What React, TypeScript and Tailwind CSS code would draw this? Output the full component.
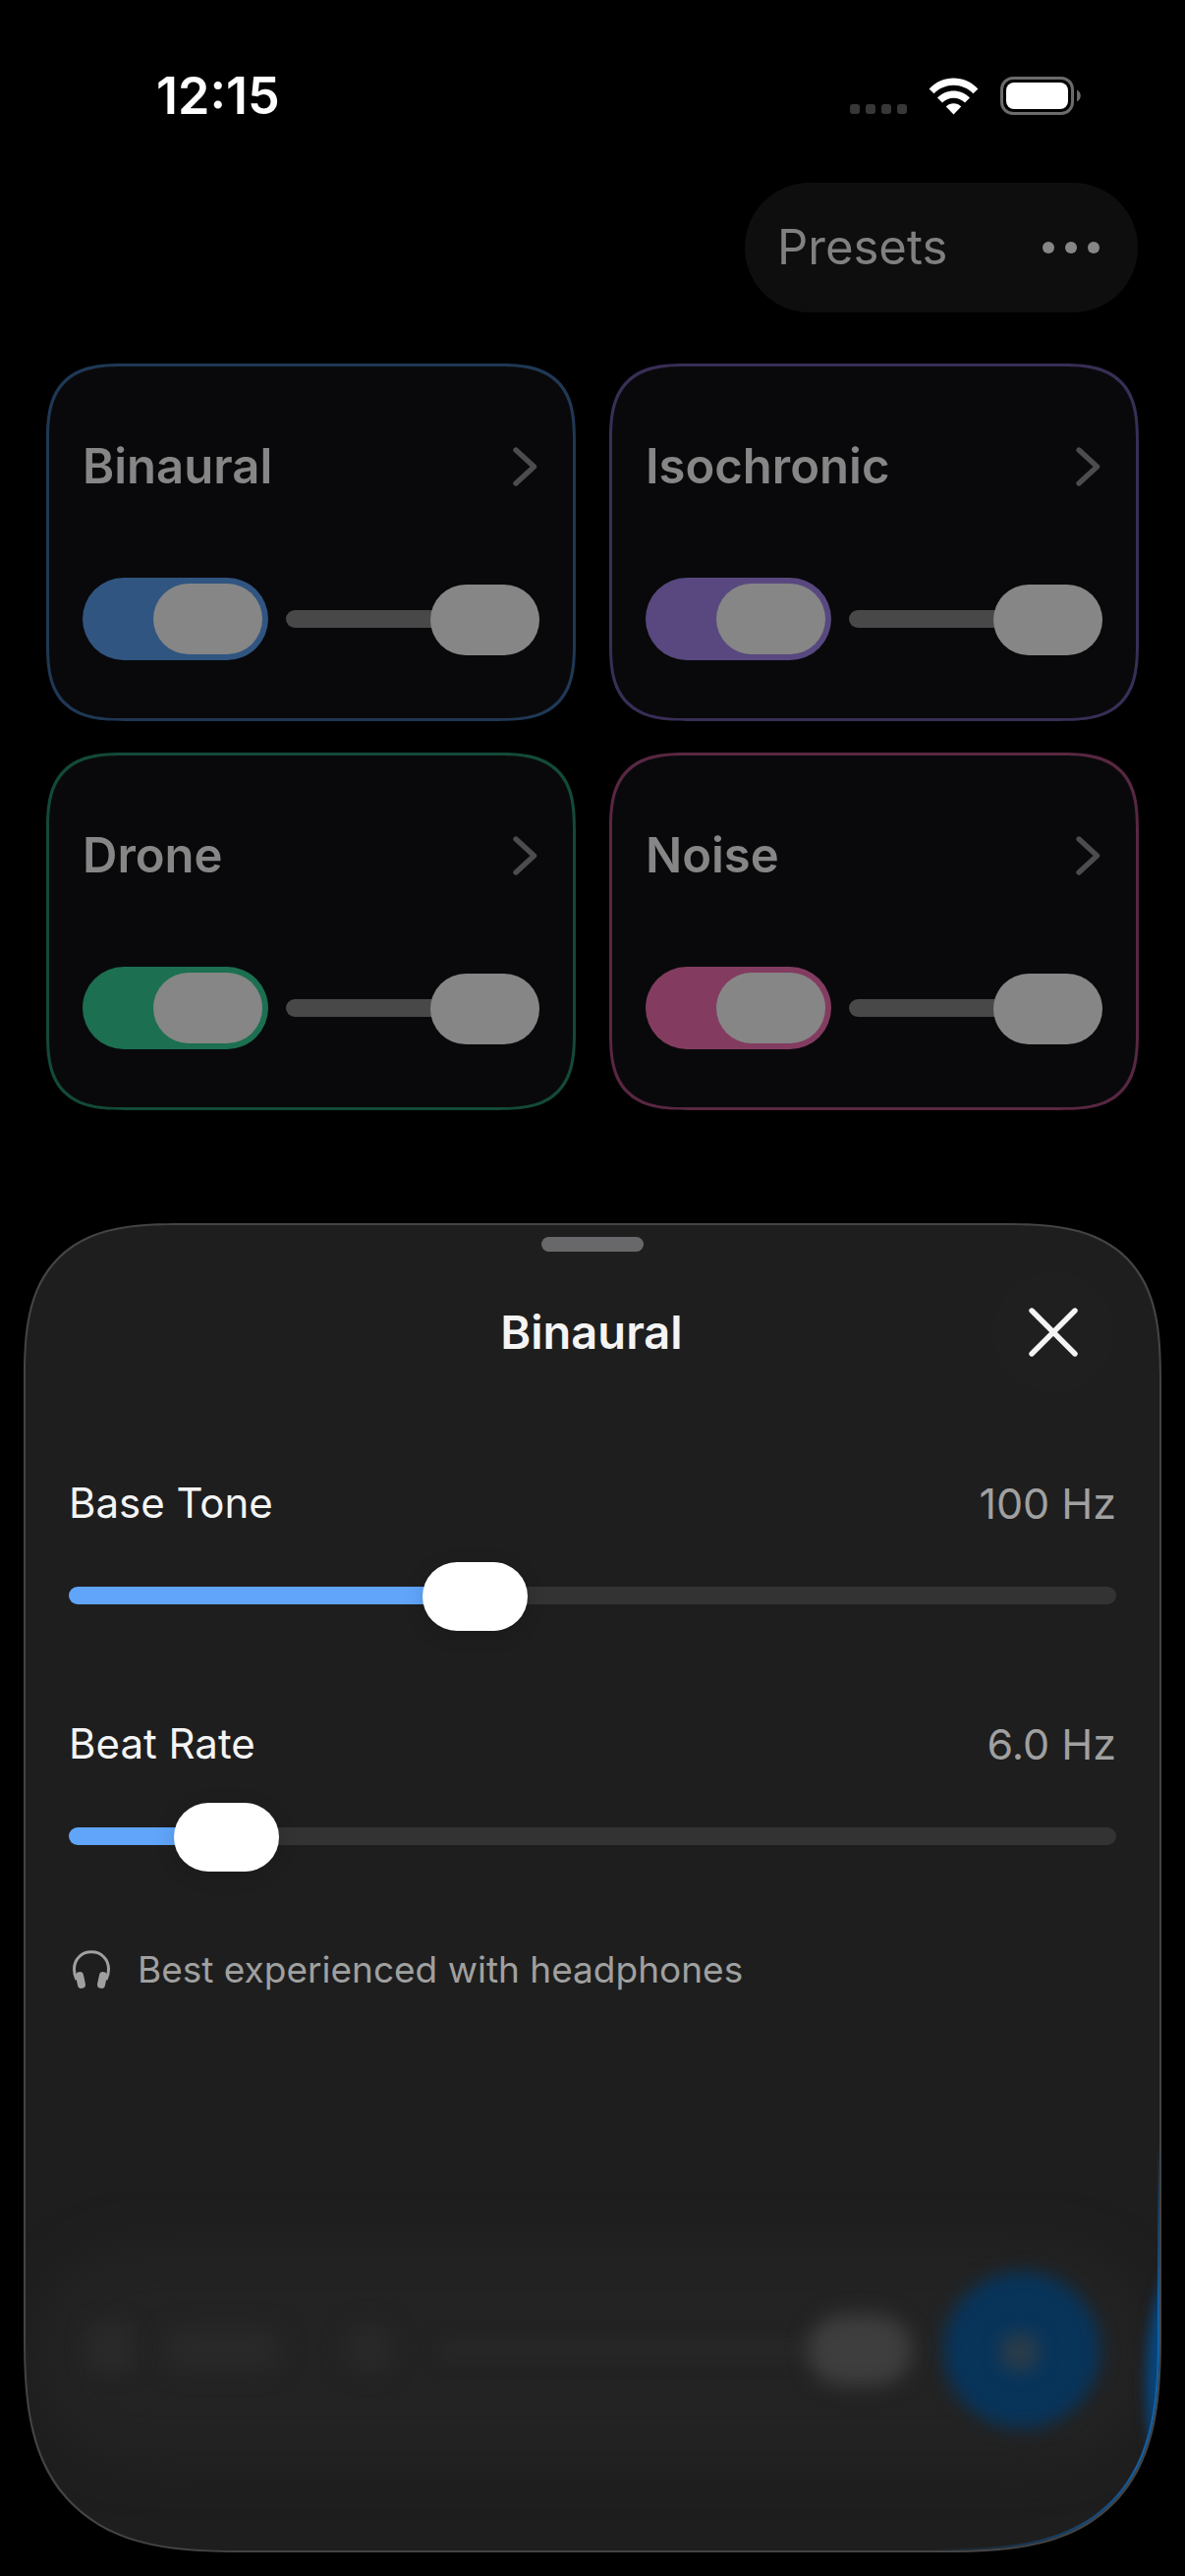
import { useState, type CSSProperties } from "react";

type Channel = {
  name: string;
  volume: number;
  border: string;
  toggle: string;
};

const channels: Channel[] = [
  { name: "Binaural", volume: 100, border: "border-[#1f3855]", toggle: "bg-[#305580]" },
  { name: "Isochronic", volume: 100, border: "border-[#382e56]", toggle: "bg-[#58487f]" },
  { name: "Drone", volume: 100, border: "border-[#134a37]", toggle: "bg-[#1c6f50]" },
  { name: "Noise", volume: 100, border: "border-[#582742]", toggle: "bg-[#833c60]" },
];

function StatusBar() {
  return (
    <div className="flex items-center justify-between pt-[78px] pl-[159px] pr-[106px]">
      <time className="text-[52px] leading-[39px] font-semibold text-white">12:15</time>
      <div className="flex h-[39px] items-center">
        <div className="mr-[22px] flex gap-[6px] self-end pb-px">
          <span className="size-[10px] rounded-[3px] bg-[#373737]" />
          <span className="size-[10px] rounded-[3px] bg-[#373737]" />
          <span className="size-[10px] rounded-[3px] bg-[#373737]" />
          <span className="size-[10px] rounded-[3px] bg-[#373737]" />
        </div>
        <svg className="mr-[22px] h-[38px] w-[51px]" viewBox="0 0 51 38" fill="#fff" aria-label="Wi-Fi">
          <path d="M0.6 11.5C14 -3.2 37 -3.2 50.4 11.5L45.5 16.3C34.5 4.8 16.5 4.8 5.5 16.3Z" />
          <path d="M9 20.6C18 11 33 11 42 20.6L37 25.6C30.6 19 20.4 19 14 25.6Z" />
          <path d="M17.8 29.6C22 25.2 29 25.2 33.2 29.6L25.5 37.4Z" />
        </svg>
        <svg className="h-[39px] w-[82px]" viewBox="0 0 82 39" fill="none" aria-label="Battery">
          <rect x="1.5" y="1.5" width="72" height="36" rx="11.5" stroke="#6b6b6b" strokeWidth="3" />
          <rect x="6" y="6" width="63" height="27" rx="8" fill="#fff" />
          <path d="M78 13.5C83 16 83 23 78 25.5Z" fill="#6b6b6b" />
        </svg>
      </div>
    </div>
  );
}

function ChannelCard({ channel }: { channel: Channel }) {
  const [on, setOn] = useState(true);
  const [volume, setVolume] = useState(channel.volume);

  return (
    <section
      className={`rounded-[60px] border-[3px] bg-[#09090b] px-[34px] pt-[72px] pb-[59px] supports-[corner-shape:squircle]:rounded-[80px] supports-[corner-shape:squircle]:[corner-shape:superellipse(1.5)] ${channel.border}`}
    >
      <button type="button" className="flex h-[60px] w-full items-center justify-between">
        <span className="text-[49px] leading-[60px] font-semibold text-[#868686]">{channel.name}</span>
        <svg className="mr-[2px] h-[40px] w-[25px]" viewBox="0 0 25 40" fill="none" aria-hidden="true">
          <path d="M3 3L21.5 20L3 37" stroke="#4c4c50" strokeWidth="5.4" strokeLinecap="round" strokeLinejoin="round" />
        </svg>
      </button>
      <div className="mt-[83px] flex items-center gap-[18px]">
        <input
          type="checkbox"
          role="switch"
          aria-label={`${channel.name} on`}
          checked={on}
          onChange={(e) => setOn(e.target.checked)}
          className={`flex h-[84px] w-[189px] shrink-0 appearance-none items-center rounded-full p-[6px] before:block before:h-[72px] before:w-[111px] before:rounded-full before:bg-[#868686] checked:justify-end ${channel.toggle}`}
        />
        <input
          type="range"
          aria-label={`${channel.name} volume`}
          value={volume}
          onChange={(e) => setVolume(Number(e.target.value))}
          className="h-[72px] w-full min-w-0 appearance-none bg-transparent [&::-webkit-slider-runnable-track]:h-[18px] [&::-webkit-slider-runnable-track]:rounded-full [&::-webkit-slider-runnable-track]:bg-[#484848] [&::-webkit-slider-thumb]:-mt-[26px] [&::-webkit-slider-thumb]:h-[72px] [&::-webkit-slider-thumb]:w-[111px] [&::-webkit-slider-thumb]:appearance-none [&::-webkit-slider-thumb]:rounded-full [&::-webkit-slider-thumb]:bg-[#868686]"
        />
      </div>
    </section>
  );
}

type ParameterProps = {
  id: string;
  label: string;
  min: number;
  max: number;
  step: number;
  initial: number;
  digits: number;
};

function Parameter({ id, label, min, max, step, initial, digits }: ParameterProps) {
  const [value, setValue] = useState(initial);
  const fill = `${((value - min) / (max - min)) * 100}%`;

  return (
    <div>
      <div className="flex items-center justify-between leading-[60px]">
        <label htmlFor={id} className="text-[42px] text-[#f4f4f4]">{label}</label>
        <span className="text-[43px] text-[#a0a0a0]">{value.toFixed(digits)} Hz</span>
      </div>
      <input
        id={id}
        type="range"
        min={min}
        max={max}
        step={step}
        value={value}
        onChange={(e) => setValue(Number(e.target.value))}
        style={{ "--fill": fill } as CSSProperties}
        className="mt-[29px] block h-[70px] w-full appearance-none bg-transparent [&::-webkit-slider-runnable-track]:h-[18px] [&::-webkit-slider-runnable-track]:rounded-full [&::-webkit-slider-runnable-track]:bg-[linear-gradient(to_right,#60a5fa_var(--fill),#333333_var(--fill))] [&::-webkit-slider-thumb]:-mt-[25px] [&::-webkit-slider-thumb]:h-[70px] [&::-webkit-slider-thumb]:w-[107px] [&::-webkit-slider-thumb]:appearance-none [&::-webkit-slider-thumb]:rounded-full [&::-webkit-slider-thumb]:bg-white [&::-webkit-slider-thumb]:shadow-[0_4px_20px_rgba(0,0,0,0.15)]"
      />
    </div>
  );
}

// The transport bar showing through the frosted sheet
function FrostedTransport() {
  return (
    <div className="pointer-events-none absolute inset-x-0 bottom-0 h-[400px] overflow-hidden" aria-hidden="true">
      <div className="absolute inset-x-[10px] top-[90px] h-[220px] rounded-full bg-[#232323] blur-[24px]" />
      <div className="absolute top-[168px] left-[62px] size-[50px] rounded-xl bg-[#292929] blur-[10px]" />
      <div className="absolute top-[174px] left-[140px] h-[42px] w-[120px] rounded-full bg-[#292929] blur-[12px]" />
      <div className="absolute top-[170px] left-[326px] size-[48px] rounded-full bg-[#292929] blur-[12px]" />
      <div className="absolute top-[186px] right-[300px] left-[420px] h-[20px] bg-[#272727] blur-[8px]" />
      <div className="absolute top-[160px] right-[252px] h-[72px] w-[106px] rounded-full bg-[#3e3e3e] blur-[10px]" />
      <div className="absolute top-[116px] right-[60px] size-[160px] rounded-full bg-[#08345a] blur-[9px]" />
      <div className="absolute top-[178px] right-[122px] size-[40px] rounded-full bg-[#2a3c49] blur-[9px]" />
      <div className="absolute top-[90px] -right-[86px] h-[280px] w-[100px] rounded-[50%] bg-[#08447a] blur-[6px]" />
    </div>
  );
}

export default function App() {
  return (
    <main className="flex min-h-screen flex-col bg-black font-['Inter','Liberation_Sans',sans-serif]">
      <StatusBar />

      <header className="mt-[69px] flex justify-end px-12">
        <div className="flex h-[132px] w-[400px] items-center justify-between rounded-full bg-[#0e0e0f] pr-[39px] pl-[33px]">
          <button type="button" className="text-[49px] leading-[60px] text-[#808080]">Presets</button>
          <button type="button" aria-label="More" className="flex gap-[11px]">
            <span className="size-[12px] rounded-full bg-[#868686]" />
            <span className="size-[12px] rounded-full bg-[#868686]" />
            <span className="size-[12px] rounded-full bg-[#868686]" />
          </button>
        </div>
      </header>

      <div className="mt-[52px] grid grid-cols-2 gap-x-[34px] gap-y-8 px-[47px]">
        {channels.map((channel) => (
          <ChannelCard key={channel.name} channel={channel} />
        ))}
      </div>

      <section
        role="dialog"
        aria-labelledby="sheet-title"
        className="relative mx-6 mt-[115px] mb-6 flex flex-1 flex-col overflow-hidden rounded-t-[119px] rounded-b-[167px] border-2 border-[#444444] bg-[#1e1e1e] px-11 supports-[corner-shape:squircle]:rounded-t-[160px] supports-[corner-shape:squircle]:rounded-b-[224px] supports-[corner-shape:squircle]:[corner-shape:superellipse(1.5)]"
      >
        <FrostedTransport />
        {/* Blue glow picked up by the lower right rim */}
        <div
          className="pointer-events-none absolute -inset-[2px] rounded-t-[119px] rounded-b-[167px] border-[4px] border-[#1260a8] [mask-image:radial-gradient(300px_260px_at_100%_88%,#000_30%,transparent)] supports-[corner-shape:squircle]:rounded-t-[160px] supports-[corner-shape:squircle]:rounded-b-[224px] supports-[corner-shape:squircle]:[corner-shape:superellipse(1.5)]"
          aria-hidden="true"
        />

        <div className="relative">
          <div className="mx-auto mt-3 h-[15px] w-[104px] rounded-full bg-[#68686b]" />
          <div className="mt-5 grid grid-cols-[124px_1fr_124px] items-center pr-[2px]">
            <h1 id="sheet-title" className="col-start-2 text-center text-[47px] leading-[60px] font-semibold text-[#f4f4f4]">
              Binaural
            </h1>
            <button type="button" aria-label="Close" className="flex size-[124px] items-center justify-center rounded-full bg-[#1f1f1f]">
              <svg className="size-[50px]" viewBox="0 0 50 50" aria-hidden="true">
                <path d="M3 3L47 47M47 3L3 47" stroke="#f4f4f4" strokeWidth="5.4" strokeLinecap="round" />
              </svg>
            </button>
          </div>

          <div className="mt-[82px] flex flex-col gap-[86px]">
            <Parameter id="base-tone" label="Base Tone" min={40} max={200} step={1} initial={100} digits={0} />
            <Parameter id="beat-rate" label="Beat Rate" min={0.5} max={50} step={0.5} initial={6} digits={1} />
          </div>

          <p className="mt-[71px] flex items-center gap-[28px] text-[37px] leading-[60px] text-[#a0a0a0]">
            <svg className="ml-1 h-[40px] w-[38px]" viewBox="0 0 38 40" fill="none" aria-hidden="true">
              <path d="M4 30C2 26 1.5 23 1.5 19.5C1.5 9 9 1.8 19 1.8C29 1.8 36.5 9 36.5 19.5C36.5 23 36 26 34 30" stroke="#a0a0a0" strokeWidth="3" />
              <rect x="4" y="22" width="8" height="17" rx="4" fill="#a0a0a0" transform="rotate(-12 8 30.5)" />
              <rect x="26" y="22" width="8" height="17" rx="4" fill="#a0a0a0" transform="rotate(12 30 30.5)" />
            </svg>
            Best experienced with headphones
          </p>
        </div>
      </section>
    </main>
  );
}
